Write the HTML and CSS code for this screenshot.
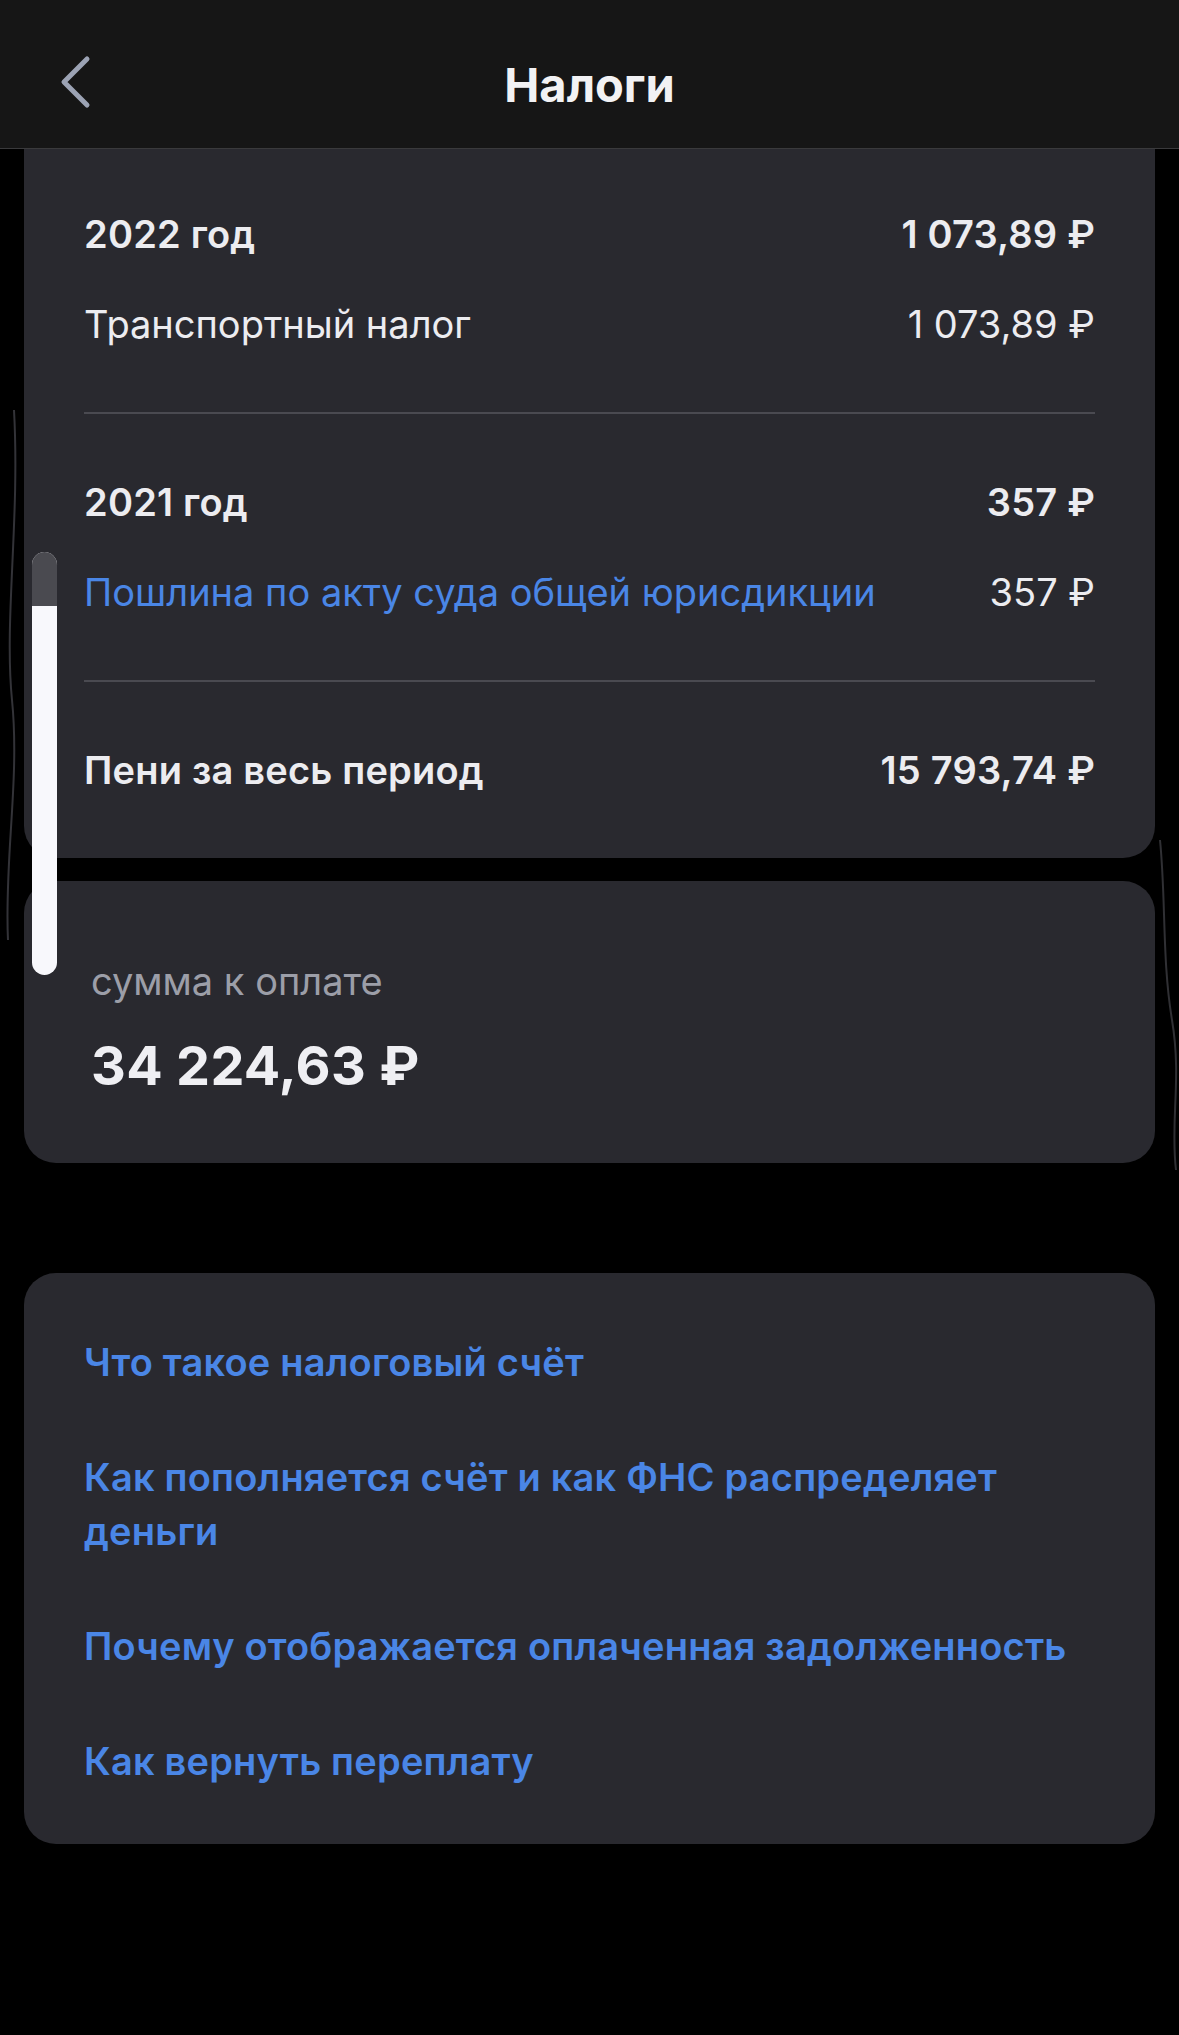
FILE: index.html
```html
<!DOCTYPE html>
<html lang="ru">
<head>
<meta charset="utf-8">
<title>Налоги</title>
<link rel="stylesheet" href="styles.css">
</head>
<body>
<div class="screen">
  <header class="topbar">
    <button class="back" aria-label="Назад">
      <svg width="40" height="56" viewBox="0 0 40 56"><path d="M31 5 L8 28 L31 51" fill="none" stroke="#9ca3b4" stroke-width="5" stroke-linecap="round" stroke-linejoin="round"/></svg>
    </button>
    <h1 class="title">Налоги</h1>
  </header>

  <main class="content">
    <section class="card card-debts">
      <div class="group group-first">
        <div class="row strong"><span>2022 год</span><span>1 073,89 ₽</span></div>
        <div class="row"><span>Транспортный налог</span><span>1 073,89 ₽</span></div>
      </div>
      <div class="divider"></div>
      <div class="group">
        <div class="row strong"><span>2021 год</span><span>357 ₽</span></div>
        <div class="row"><span class="link-plain">Пошлина по акту суда общей юрисдикции</span><span>357 ₽</span></div>
      </div>
      <div class="divider"></div>
      <div class="group">
        <div class="row strong"><span>Пени за весь период</span><span>15 793,74 ₽</span></div>
      </div>
    </section>

    <section class="card card-total">
      <div class="total-label">сумма к оплате</div>
      <div class="total-amount">34 224,63 ₽</div>
    </section>

    <section class="card card-links">
      <a class="help-link">Что такое налоговый счёт</a>
      <a class="help-link">Как пополняется счёт и как ФНС распределяет деньги</a>
      <a class="help-link">Почему отображается оплаченная задолженность</a>
      <a class="help-link">Как вернуть переплату</a>
    </section>
  </main>

  <div class="scroll-indicator"><div class="scroll-top"></div></div>
  <svg class="edge-glare" width="1179" height="1300" viewBox="0 0 1179 1300">
    <path d="M14 410 C 20 520, 4 620, 12 700 S 4 860, 8 940" fill="none" stroke="#333338" stroke-width="2"/>
    <path d="M1160 840 C 1166 900, 1162 960, 1172 1020 S 1170 1120, 1176 1170" fill="none" stroke="#303034" stroke-width="2"/>
  </svg>
</div>
</body>
</html>
```

FILE: styles.css
```css
* { box-sizing: border-box; }

html, body {
  margin: 0;
  padding: 0;
  background: #000;
}

body {
  font-family: Inter, "Noto Sans", "DejaVu Sans", sans-serif;
  color: #ececf0;
}

.screen {
  position: relative;
  width: 1179px;
  height: 2035px;
  overflow: hidden;
  background: #000;
}

.topbar {
  height: 149px;
  padding-top: 20px;
  background: #161616;
  border-bottom: 1px solid #3a3a3c;
  display: flex;
  align-items: center;
  justify-content: center;
  position: relative;
}

.back {
  position: absolute;
  left: 56px;
  top: 54px;
  width: 40px;
  height: 56px;
  padding: 0;
  border: 0;
  background: none;
  display: flex;
}

.title {
  margin: 0;
  font-size: 47px;
  font-weight: 700;
  color: #f2f2f4;
  line-height: 1;
}

.content {
  padding: 0 24px;
  display: flex;
  flex-direction: column;
}

.card {
  background: #29292f;
  border-radius: 32px;
}

.card-debts {
  border-radius: 0 0 32px 32px;
  padding: 0 60px;
}

.group {
  padding: 43px 0;
}

.group-first {
  padding-top: 40px;
}

.row {
  height: 90px;
  display: flex;
  align-items: center;
  justify-content: space-between;
  font-size: 38px;
  font-weight: 400;
  color: #ececf0;
}

.row.strong {
  font-weight: 600;
  letter-spacing: 0.2px;
}

.link-plain {
  color: #4a86e6;
}

.divider {
  height: 2px;
  background: #4a4a51;
}

.card-total {
  margin-top: 23px;
  padding: 75px 67px 62px;
}

.total-label {
  font-size: 38px;
  line-height: 50px;
  color: #9c9ea8;
}

.total-amount {
  margin-top: 25px;
  font-size: 54px;
  line-height: 70px;
  font-weight: 700;
  letter-spacing: 0.3px;
  color: #efeff3;
}

.card-links {
  margin-top: 110px;
  padding: 62px 60px 56px;
  display: flex;
  flex-direction: column;
  gap: 61px;
}

.help-link {
  font-size: 38px;
  line-height: 54px;
  font-weight: 600;
  letter-spacing: 0.2px;
  color: #4a86e6;
  max-width: 990px;
}

.scroll-indicator {
  position: absolute;
  left: 32px;
  top: 552px;
  width: 25px;
  height: 423px;
  border-radius: 12.5px;
  background: #f8f8fc;
  overflow: hidden;
}

.scroll-top {
  height: 54px;
  background: #4a4a50;
}

.edge-glare {
  position: absolute;
  left: 0;
  top: 0;
  pointer-events: none;
}
```
